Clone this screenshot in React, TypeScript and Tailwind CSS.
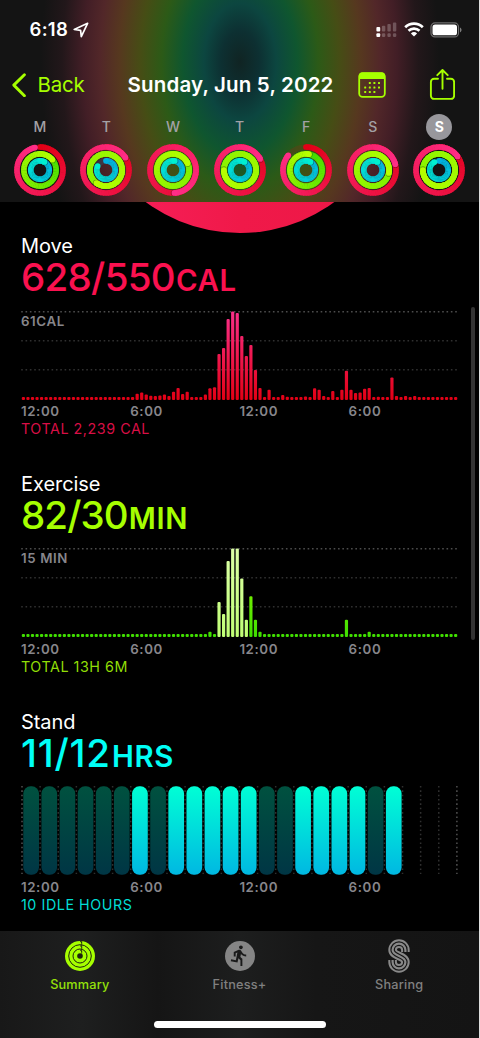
import type { ReactNode } from "react";
import { MdDirectionsRun } from "react-icons/md";

type RGB = [number, number, number];

const MOVE: [RGB, RGB] = [[226, 0, 22], [255, 45, 135]];
const EXERCISE: [RGB, RGB] = [[60, 222, 0], [184, 255, 0]];
const STAND: [RGB, RGB] = [[0, 176, 226], [0, 240, 208]];

const DAYS: { letter: string; move: number; exercise: number; stand: number; selected?: boolean }[] = [
  { letter: "M", move: 0.965, exercise: 1.14, stand: 1.08 },
  { letter: "T", move: 1.16, exercise: 2.6, stand: 0.82 },
  { letter: "W", move: 1.49, exercise: 2.18, stand: 1.03 },
  { letter: "T", move: 1.17, exercise: 2.75, stand: 1.08 },
  { letter: "F", move: 0.86, exercise: 1.03, stand: 1.08 },
  { letter: "S", move: 1.21, exercise: 2.28, stand: 1.08 },
  { letter: "S", move: 1.15, exercise: 2.75, stand: 0.917, selected: true },
];

const FLAT = 3;
const MOVE_BARS: number[] = [
  ...Array(25).fill(FLAT),
  6.3, 7.5, 5.5, 4.3, 3.9, 4.5, 5.5, 4, 8.3, 12, 6, 8.3, 3, 3, 3, 5.5, 11.8, 12.8, 46, 52, 81, 88.5, 87,
  64, 44, 55, 30, 12, 3, 10.3, 3, 3, 5, 3.3, 3, 3, 3, 3.6, 3, 11.7, 10.3, 4, 3, 9, 3, 10.3, 29.3, 10.3, 7, 7.6,
  11.3, 12, 3, 3.3, 3, 3, 22.6, 4, 3, 4, 3, 4,
  ...Array(9).fill(FLAT),
];
const EXERCISE_BARS: number[] = [
  ...Array(41).fill(FLAT),
  5.3, 3, 35, 23, 76, 88.5, 88.5, 58.5, 17.3, 40.7, 17.3, 5.3,
  ...Array(18).fill(FLAT),
  17.3, 3, 3, 3, 3, 5.3,
  ...Array(19).fill(FLAT),
];
const STAND_HOURS = "000000101111100111101---".split("");

function Ring({ r, total, colors }: { r: number; total: number; colors: [RGB, RGB] }) {
  const steps = Math.ceil(total * 60);
  const at = (t: number) => {
    const a = t * 2 * Math.PI;
    return [26 + r * Math.sin(a), 26 - r * Math.cos(a)];
  };
  const color = (t: number) => {
    const [a, b] = colors;
    return `rgb(${a.map((v, i) => Math.round(v + (b[i] - v) * t)).join(",")})`;
  };
  const [ex, ey] = at(total);
  const [sx, sy] = at(0);
  const [hx, hy] = at(total + 0.14 / r);
  return (
    <g fill="none" strokeWidth={5.7}>
      <circle cx={26} cy={26} r={r} stroke={color(0)} strokeOpacity={0.15} />
      <circle cx={sx} cy={sy} r={2.85} fill={color(0)} />
      {Array.from({ length: steps }, (_, i) => {
        const [x1, y1] = at((i / steps) * total);
        const [x2, y2] = at(Math.min(total, ((i + 1.25) / steps) * total));
        return <path key={i} d={`M${x1} ${y1}A${r} ${r} 0 0 1 ${x2} ${y2}`} stroke={color(i / steps)} />;
      })}
      {total > 1 && <circle cx={hx} cy={hy} r={2.8} fill="black" fillOpacity={0.3} />}
      <circle cx={ex} cy={ey} r={2.85} fill={color(1)} />
    </g>
  );
}

function DayRings({ move, exercise, stand }: { move: number; exercise: number; stand: number }) {
  return (
    <svg width="52" height="52" viewBox="0 0 52 52">
      <Ring r={23} total={move} colors={MOVE} />
      <Ring r={16.1} total={exercise} colors={EXERCISE} />
      <Ring r={9.2} total={stand} colors={STAND} />
    </svg>
  );
}

function StatusBar() {
  return (
    <div className="flex h-[59px] items-center pl-[29.5px] pr-[17px] text-white">
      <span className="text-[18.5px] font-semibold leading-none tracking-[0.3px]">6:18</span>
      <svg className="ml-[5px]" width="16" height="16" viewBox="0 0 16 16" fill="none" stroke="white" strokeWidth="1.7" strokeLinejoin="round">
        <path d="M14.6 1.3 1.2 7.5l6.4.9.7 6.3z" />
      </svg>
      <svg className="ml-auto" width="21" height="16" viewBox="0 0 21 16" fill="white">
        <rect x="0.4" y="5" width="3.8" height="4.6" rx="1" />
        <rect x="0.4" y="11.2" width="3.8" height="3.8" rx="1" />
        <g fillOpacity="0.24">
          <rect x="5.9" y="3.7" width="3.4" height="5.9" rx="1" />
          <rect x="11.4" y="2" width="3.4" height="7.6" rx="1" />
          <rect x="16.9" y="0.4" width="3.4" height="9.2" rx="1" />
          <rect x="5.9" y="11.2" width="3.4" height="3.8" rx="1.2" />
          <rect x="11.4" y="11.2" width="3.4" height="3.8" rx="1.2" />
          <rect x="16.9" y="11.2" width="3.4" height="3.8" rx="1.2" />
        </g>
      </svg>
      <svg className="ml-[7px]" width="20" height="15" viewBox="0 0 20 15" fill="none" stroke="white" strokeWidth="2.7">
        <path d="M1.2 5.2a12.7 12.7 0 0 1 17.6 0" />
        <path d="M4.5 8.8a8 8 0 0 1 11 0" />
        <path d="M10 14.6 6.9 11.4a4.6 4.6 0 0 1 6.2 0z" fill="white" stroke="none" />
      </svg>
      <svg className="ml-[6px]" width="32" height="16" viewBox="0 0 32 16">
        <rect x="1" y="0.9" width="27.5" height="14" rx="4" fill="none" stroke="white" strokeOpacity="0.38" strokeWidth="1.2" />
        <rect x="2.5" y="2.5" width="24.5" height="10.8" rx="2.6" fill="white" />
        <path d="M30 5.5c2 .8 2 4 0 4.8z" fill="white" fillOpacity="0.45" />
      </svg>
    </div>
  );
}

const CALENDAR_DOTS = [[1, 0], [2, 0], [3, 0], [0, 1], [1, 1], [2, 1], [3, 1], [0, 2], [1, 2], [2, 2]];

function NavBar() {
  return (
    <div className="flex h-[50px] items-center pl-[12px] pr-[24px] pt-[2px]">
      <svg width="14" height="24" viewBox="0 0 14 24" fill="none" stroke="#a6ff00" strokeWidth="2.9" strokeLinecap="round" strokeLinejoin="round">
        <path d="M12.4 1.7 1.8 12.1l10.6 10.6" />
      </svg>
      <span className="ml-[11.5px] w-[90px] whitespace-nowrap text-[20.5px] leading-none tracking-[-0.2px] text-[#a6ff00]">Back</span>
      <span className="w-[230.5px] whitespace-nowrap text-[20.5px] font-semibold leading-none tracking-[0.17px] text-white">Sunday, Jun 5, 2022</span>
      <svg width="28" height="26" viewBox="0 0 28 26" fill="#a6ff00">
        <rect x="1.2" y="1.2" width="25.6" height="23.6" rx="3.4" fill="none" stroke="#a6ff00" strokeWidth="1.8" />
        <path d="M1 7V4a3.4 3.4 0 0 1 3.4-3.4h19.2A3.4 3.4 0 0 1 27 4v3z" />
        {CALENDAR_DOTS.map(([c, r]) => (
          <rect key={`${c}-${r}`} x={6.2 + c * 4.6} y={9.9 + r * 4.5} width="2" height="2" rx="0.5" />
        ))}
      </svg>
      <svg className="ml-auto" width="26" height="32" viewBox="0 0 26 32" fill="none" stroke="#a6ff00" strokeWidth="1.9" strokeLinecap="round" strokeLinejoin="round">
        <path d="M9 9.8H5.1a3.2 3.2 0 0 0-3.200 3.200v13.700a3.200 3.200 0 0 0 3.200 3.200h16.800a3.200 3.200 0 0 0 3.200-3.200V13a3.200 3.200 0 0 0-3.200-3.200H18" />
        <path d="M13.500 19.800V1.200M8.300 6.200 13.500 1l5.200 5.200" />
      </svg>
    </div>
  );
}

function Header() {
  return (
    <header className="flex h-[202px] shrink-0 flex-col bg-[radial-gradient(212px_345px_at_240px_62px,#102423_0%,#0d3032_9%,#0c4640_17%,#0f562f_27%,#2c5a17_37%,#464d15_47%,#56381f_57%,#522729_66%,#421e26_74%,#22171a_84%,#141414_94%)]">
      <StatusBar />
      <NavBar />
      <div className="flex pl-[6.5px]">
        {DAYS.map((d, i) => (
          <div key={i} className="flex w-[66.6px] flex-col items-center">
            <div className="flex h-[35px] items-center">
              <span className={d.selected
                ? "flex size-[26px] items-center justify-center rounded-full bg-[#98979c] text-[14px] font-bold text-white"
                : "text-[14px] font-medium text-[#a3a1a5]"}>{d.letter}</span>
            </div>
            <DayRings move={d.move} exercise={d.exercise} stand={d.stand} />
          </div>
        ))}
      </div>
    </header>
  );
}

function Section({ title, value, unit, footer, accent, footerAccent, valueClass, children }: {
  title: string; value: string; unit: string; footer: string; accent: string; footerAccent: string; valueClass: string; children: ReactNode;
}) {
  return (
    <section className="flex h-[237.7px] shrink-0 flex-col pl-[21px]">
      <h2 className="h-[23px] text-[20px] leading-[24px] tracking-[-0.05px] text-white">{title}</h2>
      <div className={`flex h-[40px] items-baseline whitespace-nowrap leading-[40px] ${accent}`}>
        <span className={`text-[38.5px] font-medium ${valueClass}`}>{value}</span>
        <span className="ml-[1px] text-[29.3px] font-semibold tracking-[0.7px]">{unit}</span>
      </div>
      <div className="mt-[13.5px] h-[89px] w-[436.8px]">{children}</div>
      <div className="mt-[2.5px] flex h-[18px] text-[13.3px] font-semibold leading-[18px] tracking-[0.6px] text-[#87868b]">
        {["12:00", "6:00", "12:00", "6:00"].map((t, i) => (
          <span key={i} className="w-[109.2px]">{t}</span>
        ))}
      </div>
      <p className={`h-[18px] text-[14.3px] leading-[18px] tracking-[0.55px] ${footerAccent}`}>{footer}</p>
    </section>
  );
}

function BarChart({ id, label, bars, from, to, highlight }: {
  id: string; label: string; bars: number[]; from: string; to: string; highlight?: [number, number];
}) {
  return (
    <div className="relative h-full">
      <svg className="block" width="437" height="89" viewBox="0 0 437 89">
        <defs>
          <linearGradient id={id} gradientUnits="userSpaceOnUse" x1="0" y1="89" x2="0" y2="0">
            <stop offset="0" stopColor={from} />
            <stop offset="1" stopColor={to} />
          </linearGradient>
          <linearGradient id={`${id}-light`} gradientUnits="userSpaceOnUse" x1="0" y1="89" x2="0" y2="0">
            <stop offset="0" stopColor="#c0ff75" />
            <stop offset="1" stopColor="#dcffa8" />
          </linearGradient>
        </defs>
        {[0.8, 29.8, 58.8].map((y, i) => (
          <path key={y} d={`M0.2 ${y}H436.4`} stroke={i === 0 ? "#4d4d4d" : "#303030"} strokeWidth="1.5" strokeDasharray="1.6 2.74" />
        ))}
        {bars.map((h, i) => (
          <rect
            key={i}
            x={0.8 + i * 4.55}
            y={89 - h}
            width="3.2"
            height={h}
            rx="1.1"
            fill={highlight && i >= highlight[0] && i <= highlight[1] ? `url(#${id}-light)` : `url(#${id})`}
          />
        ))}
      </svg>
      <span className="absolute left-0 top-[1px] text-[13.3px] font-semibold leading-[18px] tracking-[0.6px] text-[#87868b]">{label}</span>
    </div>
  );
}

function StandChart() {
  return (
    <svg className="block" width="438" height="89" viewBox="0 0 438 89">
      <defs>
        <linearGradient id="stood" x1="0" y1="0" x2="0" y2="1">
          <stop offset="0" stopColor="#00ffd5" />
          <stop offset="1" stopColor="#00b8e2" />
        </linearGradient>
        <linearGradient id="idle" x1="0" y1="0" x2="0" y2="1">
          <stop offset="0" stopColor="#00513f" />
          <stop offset="1" stopColor="#003645" />
        </linearGradient>
      </defs>
      {Array.from({ length: 25 }, (_, i) => (
        <path key={i} d={`M${1 + i * 18.12} 0V88`} stroke={i === 0 || i === 24 ? "#505050" : "#303030"} strokeWidth="1.5" strokeDasharray="1.6 2.74" />
      ))}
      {STAND_HOURS.map((h, i) => h !== "-" && (
        <rect key={i} x={2.3 + i * 18.13} y="0.3" width="15.7" height="88.5" rx="7.2" fill={h === "1" ? "url(#stood)" : "url(#idle)"} />
      ))}
    </svg>
  );
}

function SummaryIcon() {
  return (
    <svg width="32" height="34" viewBox="0 0 32 34" fill="none">
      <circle cx="16" cy="17" r="15" fill="#a6ff00" />
      <g stroke="#1d2210" strokeWidth="1">
        <circle cx="16" cy="17" r="11.3" />
        <circle cx="16" cy="17" r="7" />
      </g>
      <circle cx="16" cy="17" r="2.8" fill="#1d2210" />
      <path d="M17.7 1.5v13.2M16 2.3a2 2 0 0 1 1.7 1.8M16 6.7a2 2 0 0 1 1.7 1.8M16 11a2 2 0 0 1 1.7 1.8" stroke="#1d2210" strokeWidth="0.8" />
    </svg>
  );
}

function FitnessIcon() {
  return (
    <div className="flex h-[34px] items-center">
      <div className="flex size-[30px] items-center justify-center rounded-full bg-[#858585]">
        <MdDirectionsRun size={23} color="#1a1a1a" />
      </div>
    </div>
  );
}

function SharingIcon() {
  const d = "M17.4 13V11a6.4 6.4 0 0 0-12.8 0C4.6 17.2 17.4 16.8 17.4 23a6.4 6.4 0 0 1-12.8 0V21";
  return (
    <svg width="22" height="34" viewBox="0 0 22 34" fill="none">
      <path d={d} stroke="#898989" strokeWidth="8.6" />
      <path d={d} stroke="#171717" strokeWidth="4.6" />
      <path d={d} stroke="#898989" strokeWidth="2.2" />
    </svg>
  );
}

function TabBar() {
  const tabs = [
    { label: "Summary", icon: <SummaryIcon />, color: "text-[#95e20a]" },
    { label: "Fitness+", icon: <FitnessIcon />, color: "text-[#808080]" },
    { label: "Sharing", icon: <SharingIcon />, color: "text-[#808080]" },
  ];
  return (
    <nav className="flex h-[107px] shrink-0 flex-col items-center bg-[linear-gradient(90deg,#181818_0%,#1e1f1f_17%,#151515_33%,#1d1e1e_50%,#161616_66%,#141414_100%)]">
      <div className="flex h-[90px] w-full pt-[7.5px]">
        {tabs.map((t) => (
          <div key={t.label} className="flex flex-1 flex-col items-center">
            {t.icon}
            <span className={`mt-[3.5px] text-[12.7px] font-medium leading-[18px] tracking-[0.2px] ${t.color}`}>{t.label}</span>
          </div>
        ))}
      </div>
      <div className="h-[7px] w-[172px] rounded-full bg-white" />
    </nav>
  );
}

export default function App() {
  return (
    <div className="h-[1038px] w-[480px] bg-[#dedede] pr-px font-['Inter',sans-serif]">
      <div className="relative flex h-full w-[479px] flex-col overflow-hidden bg-black">
        <Header />
        <main className="relative flex h-[729px] shrink-0 flex-col overflow-hidden pt-[32.3px]">
          <div className="absolute left-[80.5px] top-[-286.7px] size-[318px] rounded-full bg-linear-to-r from-[#f9205e] via-[#f01949] to-[#ec1746]" />
          <Section title="Move" value="628/550" unit="CAL" footer="TOTAL 2,239 CAL" accent="text-[#fa114f]" footerAccent="text-[#d80f46]" valueClass="tracking-[-0.7px]">
            <BarChart id="move" label="61CAL" bars={MOVE_BARS} from="#e20014" to="#fb308b" />
          </Section>
          <Section title="Exercise" value="82/30" unit="MIN" footer="TOTAL 13H 6M" accent="text-[#a6ff00]" footerAccent="text-[#91dd06]" valueClass="tracking-[-0.9px]">
            <BarChart id="exercise" label="15 MIN" bars={EXERCISE_BARS} from="#3ede00" to="#a6ff00" highlight={[43, 49]} />
          </Section>
          <Section title="Stand" value="11/12" unit="HRS" footer="10 IDLE HOURS" accent="text-[#00fff6]" footerAccent="text-[#00ddd5]" valueClass="tracking-[0.8px]">
            <StandChart />
          </Section>
          <div className="absolute right-[4px] top-[105px] h-[333px] w-[4px] rounded-full bg-[#333333]" />
        </main>
        <TabBar />
      </div>
    </div>
  );
}
